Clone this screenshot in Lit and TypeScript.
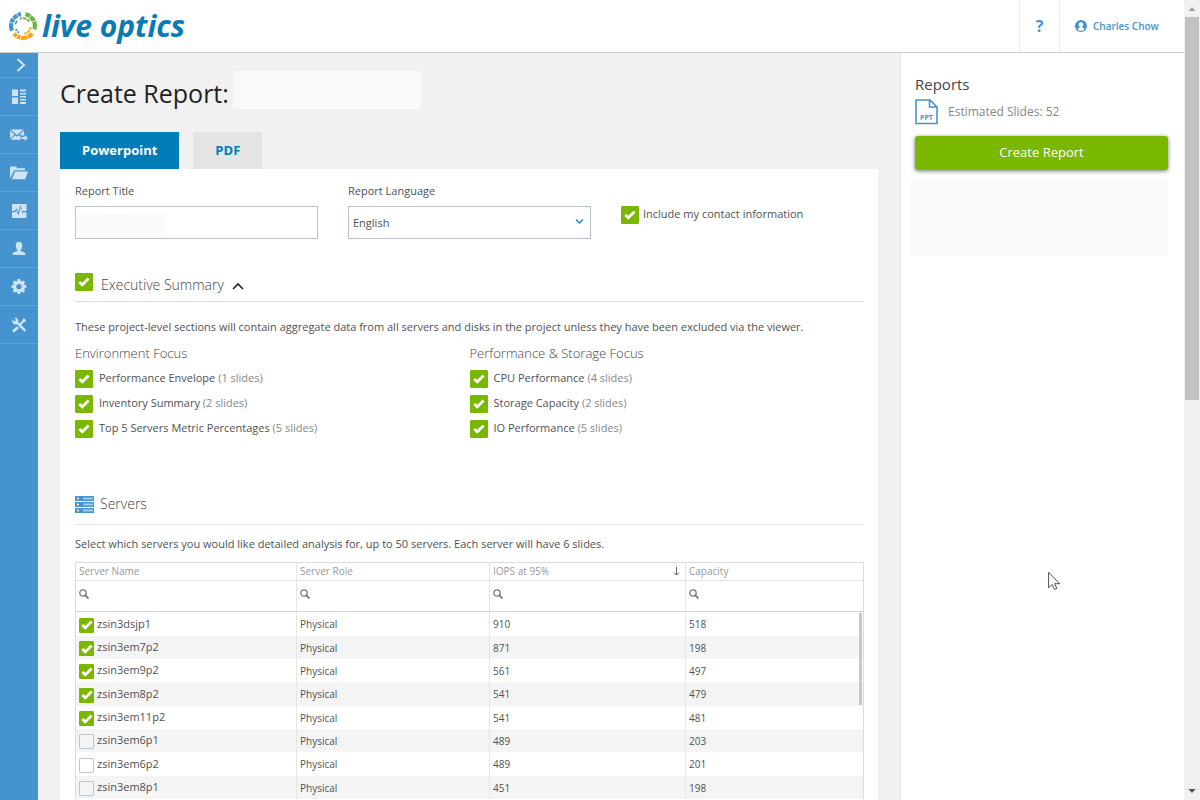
import { LitElement, html, css, svg } from "lit";
import { customElement, state } from "lit/decorators.js";

interface Arc { r: number; from: number; to: number; width: number; color: string; }
interface Section { label: string; slides: number; }
interface Server { name: string; role: string; iops: number; capacity: number; picked: boolean; }

const BLUE = "#4694cf";
const GREEN = "#6cb644";
const ORANGE = "#f7a51c";

const LOGO_ARCS: Arc[] = [
  { r: 12, from: 157, to: 194, width: 4.2, color: BLUE },
  { r: 12, from: 197, to: 217, width: 4.2, color: BLUE },
  { r: 12, from: 220, to: 241, width: 4.2, color: BLUE },
  { r: 12, from: 244, to: 260, width: 4.2, color: BLUE },
  { r: 12, from: 281, to: 305, width: 4.2, color: GREEN },
  { r: 12, from: 308, to: 335, width: 4.2, color: GREEN },
  { r: 12, from: 338, to: 376, width: 4.2, color: GREEN },
  { r: 12, from: 40, to: 65, width: 4.2, color: ORANGE },
  { r: 12, from: 68, to: 99, width: 4.2, color: ORANGE },
  { r: 12, from: 102, to: 119, width: 4.2, color: ORANGE },
  { r: 12, from: 122, to: 140, width: 4.2, color: ORANGE },
  { r: 7.8, from: 246, to: 264, width: 2, color: GREEN },
  { r: 7.8, from: 270, to: 296, width: 2, color: GREEN },
  { r: 7.8, from: 302, to: 326, width: 2, color: GREEN },
  { r: 7.8, from: 8, to: 26, width: 2, color: ORANGE },
  { r: 7.8, from: 32, to: 54, width: 2, color: ORANGE },
  { r: 7.8, from: 60, to: 80, width: 2, color: ORANGE },
  { r: 7.8, from: 120, to: 134, width: 2, color: BLUE },
  { r: 7.8, from: 142, to: 156, width: 2, color: BLUE },
  { r: 7.8, from: 192, to: 222, width: 1.6, color: BLUE },
];

const arcPath = (a: Arc) => {
  const pt = (deg: number) => {
    const t = (deg * Math.PI) / 180;
    return `${(15 + a.r * Math.cos(t)).toFixed(2)} ${(15 + a.r * Math.sin(t)).toFixed(2)}`;
  };
  return `M${pt(a.from)}A${a.r} ${a.r} 0 0 1 ${pt(a.to)}`;
};

const logoMark = html`<svg class="mark" viewBox="0 0 30 30" aria-hidden="true">
  ${LOGO_ARCS.map((a) => svg`<path d=${arcPath(a)} fill="none" stroke=${a.color} stroke-width=${a.width} />`)}
</svg>`;

const NAV = [
  { label: "Dashboard", icon: svg`<path d="M2 1.500h6v6.500H2zM2 9.500h6V16H2zM10 1.500h6v2h-6zM10 5h6v1.500h-6zM10 8h6v1.500h-6zM10 11h6v1.500h-6zM10 14h6v2h-6z"/>` },
  { label: "Send", icon: svg`<path d="M.5 3.500h13L7 9zM0 4.600l4.300 4L0 12.800zM14 4.600v5h-2.200L9.700 8.600zM5 9.300l2 1.500 2-1.500 1.600 1.400v3.100H.6zM11.500 10.900h3V9l3.500 3-3.500 3v-2h-3z"/>` },
  { label: "Projects", icon: svg`<path d="M0 14.500V3.500q0-1 1-1h5l1.500 1.700H14q1 0 1 1v1H5.200Q4 6.200 3.500 7.400z"/><path d="M5 7.500h13l-2.800 7.700H1.900z"/>` },
  { label: "Performance", icon: svg`<path fill-rule="evenodd" d="M2 2h14.500v14H2zM2 9v1.200h3.200l1.200-2 1.900 5.200 2.300-7.700 1.700 5.500.8-1h3.400V9h-4l-.6.5L10.700 3 8.100 10.500 6.600 6.200 4.600 9z"/>` },
  { label: "Users", icon: svg`<path d="M9 1.800c2.200 0 3.300 1.700 3.300 3.800S11.200 9.800 10.600 10v1l3.600 1.200q1.300.6 1.300 2.800H2.500q0-2.200 1.300-2.800L7.400 11v-1C6.800 9.800 5.700 7.700 5.700 5.600S6.800 1.800 9 1.800z"/>` },
  { label: "Settings", icon: svg`<path fill-rule="evenodd" d="M7.600 1.500h2.800l.5 2 1.300.6 1.800-1.100 2 2-1.100 1.800.6 1.300 2 .5v2.800l-2 .5-.6 1.300 1.100 1.800-2 2-1.800-1.100-1.300.6-.5 2H7.600l-.5-2-1.300-.6L4 17l-2-2 1.100-1.800-.6-1.300-2-.5V8.600l2-.5.6-1.300L2 5l2-2 1.800 1.100 1.300-.6zM9 7a3 3 0 1 0 0 6 3 3 0 0 0 0-6z" transform="translate(1 -.2) scale(.88)"/>` },
  { label: "Tools", icon: svg`<path d="M2.200 3.400l2.300 2.200 1.700-1.500L4.200 1.800C7 1 9 3.400 8.200 6l7.300 7.400q1 2-1 2.400L7 8.300C4.500 9 1.700 7.300 2.200 3.400z"/><path d="M13.700 2l2.300 2.200-1 1.700-1.500.6-3 3-1.400-1.400 3-3 .5-1.500zM7.300 10.300l1.600 1.600-4.200 4q-1.500.6-2-.4-.8-.8-.1-1.600z"/>` },
];

const magnifier = html`<svg class="lens" viewBox="0 0 10 10" aria-hidden="true">
  <circle cx="4" cy="4" r="3.2" fill="none" stroke="#777" stroke-width="1.300" />
  <path d="M6.300 6.300l3.200 3.200" stroke="#777" stroke-width="1.700" />
</svg>`;

const ENVIRONMENT: Section[] = [
  { label: "Performance Envelope", slides: 1 },
  { label: "Inventory Summary", slides: 2 },
  { label: "Top 5 Servers Metric Percentages", slides: 5 },
];
const PERFORMANCE: Section[] = [
  { label: "CPU Performance", slides: 4 },
  { label: "Storage Capacity", slides: 2 },
  { label: "IO Performance", slides: 5 },
];

const server = (name: string, iops: number, capacity: number, picked: boolean): Server =>
  ({ name, role: "Physical", iops, capacity, picked });

const SERVERS: Server[] = [
  server("zsin3dsjp1", 910, 518, true),
  server("zsin3em7p2", 871, 198, true),
  server("zsin3em9p2", 561, 497, true),
  server("zsin3em8p2", 541, 479, true),
  server("zsin3em11p2", 541, 481, true),
  server("zsin3em6p1", 489, 203, false),
  server("zsin3em6p2", 489, 201, false),
  server("zsin3em8p1", 451, 198, false),
];

const COLUMNS = ["Server Name", "Server Role", "IOPS at 95%", "Capacity"];

@customElement("app-root")
export class AppRoot extends LitElement {
  static styles = css`
    :host {
      display: flex;
      height: 100vh;
      overflow: hidden;
      background: #fff;
      color: #4f5256;
      font: 11px/16px "Open Sans", "Noto Sans", sans-serif;
    }
    * { box-sizing: border-box; }
    h1, h2, h3, p { margin: 0; font-weight: 400; }
    a { color: inherit; text-decoration: none; }
    button, input, select { font: inherit; color: inherit; }

    .app { flex: 1; min-width: 0; display: flex; flex-direction: column; }
    .top {
      flex: none;
      height: 53px;
      display: flex;
      align-items: stretch;
      border-bottom: 1px solid #ccc;
      color: #4694cf;
      font-weight: 600;
    }
    .brand {
      flex: 1;
      display: flex;
      align-items: center;
      gap: 4px;
      padding-left: 8px;
      color: #0a7ab9;
      font-size: 30px;
      line-height: 40px;
      font-weight: 700;
      font-style: italic;
    }
    .mark { width: 30px; height: 30px; }
    .help {
      width: 40px;
      border: 0;
      border-left: 1px solid #ececec;
      background: none;
      font-size: 16px;
      font-weight: 700;
      padding: 0;
    }
    .account {
      width: 125px;
      display: flex;
      align-items: center;
      gap: 6px;
      padding-left: 15px;
      border-left: 1px solid #ececec;
      font-size: 10px;
    }
    .avatar { width: 12px; height: 12px; }

    .body { flex: 1; min-height: 0; display: flex; }
    .side { flex: none; width: 38px; background: #4694cf; }
    .side a {
      display: flex;
      align-items: center;
      justify-content: center;
      height: 38px;
      border-bottom: 1px solid #5ba3da;
    }
    .side .expand { height: 25px; padding-left: 3px; }
    .side svg { width: 18px; height: 18px; fill: #cfe3f4; }
    .side .expand svg { width: 10px; height: 14px; fill: none; stroke: #cfe3f4; stroke-width: 2; }

    .main {
      flex: 1;
      min-width: 0;
      overflow: hidden;
      padding: 18px 22px 0;
      background: #f1f1f1;
    }
    .title { display: flex; align-items: center; gap: 4px; height: 38px; }
    .title h1 { font-size: 25px; line-height: 38px; color: #222; white-space: nowrap; padding-top: 6px; }
    .title .name { width: 188px; height: 38px; background: #f9f9f9; }
    .tabs { display: flex; gap: 14px; margin-top: 23px; }
    .tab {
      height: 37px;
      padding: 0 22px 2px;
      border: 0;
      background: #e4e4e4;
      color: #007db8;
      font-size: 13px;
      font-weight: 700;
    }
    .tab.on { background: #007db8; color: #fff; }

    .card { background: #fff; padding: 14px 14px 14px 15px; }
    .fields { display: grid; grid-template-columns: repeat(3, 1fr); gap: 30px; }
    .field { display: flex; flex-direction: column; gap: 7px; }
    .box {
      width: 100%;
      height: 33px;
      border: 1px solid #b2c4d2;
      border-radius: 0;
      background-color: #fff;
      padding: 0 4px;
      margin: 0;
    }
    .masked {
      background: linear-gradient(#f9f9f9, #f9f9f9) 0 50% / 88px 20px no-repeat #fff;
    }
    .choice { position: relative; }
    .choice select { appearance: none; display: block; }
    .choice svg { position: absolute; right: 7px; top: 12px; width: 9px; height: 7px; pointer-events: none; }

    .tick {
      flex: none;
      appearance: none;
      width: 18px;
      height: 18px;
      margin: 0;
      border: 1px solid #b9c9d6;
      border-radius: 1px;
      background: transparent;
    }
    .tick:checked {
      border-color: #7ab800;
      background: #7ab800 center / 12px 10px no-repeat
        url("data:image/svg+xml,%3Csvg xmlns='http://www.w3.org/2000/svg' viewBox='0 0 12 10'%3E%3Cpath d='M1.300 5l3 2.800L10.600 1.600' fill='none' stroke='white' stroke-width='2.800'/%3E%3C/svg%3E");
    }
    .option { display: flex; align-items: flex-start; gap: 6px; }
    .contact { padding-top: 23px; gap: 4px; }

    .head {
      display: flex;
      align-items: center;
      height: 31px;
      border-bottom: 1px solid #e2e2e2;
      color: #444;
    }
    .head h2 { font-size: 14px; line-height: 20px; font-weight: 300; }
    .summary { margin-top: 32px; padding-bottom: 8px; gap: 8px; }
    .summary h2 { padding-top: 6px; }
    .summary .fold { border: 0; background: none; padding: 7px 0 0; line-height: 0; }
    .fold svg { width: 12px; height: 8px; }
    .note { margin-top: 17px; }
    .focus { display: grid; grid-template-columns: 1fr 1fr; margin-top: 8px; }
    .focus h3 { font-size: 13px; line-height: 20px; font-weight: 300; margin-bottom: 7px; color: #444; }
    .focus .option { height: 25px; }
    .focus small { font-size: 11px; color: #85888c; }

    .servers { margin-top: 43px; padding-bottom: 4px; gap: 6px; height: 37px; }
    .servers svg { width: 19px; height: 17px; }
    .pick { margin-top: 11px; }
    .grid { position: relative; margin-top: 10px; }
    .thumb { position: absolute; right: 2px; top: 51px; width: 3px; height: 92px; background: #c8c8c8; }
    table {
      width: 100%;
      table-layout: fixed;
      border-collapse: separate;
      border-spacing: 0;
      border: 1px solid #dcdcdc;
      border-bottom: 0;
    }
    th, td { padding: 0 3px; border-right: 1px solid #e6e6e6; text-align: left; font-weight: 400; }
    th:last-child, td:last-child { border-right: 0; }
    .c1 { width: 221px; }
    .c2 { width: 193px; }
    .c3 { width: 196px; }
    .names th { height: 18px; font-size: 10px; color: #96999c; border-bottom: 1px solid #e2e2e2; }
    .colhead { display: flex; justify-content: space-between; align-items: center; line-height: 17px; }
    .colhead svg { width: 7px; height: 9px; margin-right: 2px; }
    .filters td { height: 31px; border-bottom: 1px solid #d6d6d6; }
    .search { display: flex; align-items: center; gap: 4px; padding: 0 0 4px; }
    .lens { flex: none; width: 10px; height: 10px; }
    .search input { flex: 1; min-width: 0; height: 20px; border: 0; background: none; padding: 0; }
    .rows td { height: 23px; font-size: 10px; }
    .rows tr:nth-child(3n + 1) td { height: 24px; }
    .rows tr:nth-child(even) { background: #f4f4f4; }
    .rows .option { gap: 3px; font-size: 11px; align-items: flex-end; }
    .rows label { padding-bottom: 1px; }
    .rows .tick { width: 15px; height: 15px; }

    .aside {
      flex: none;
      width: 284px;
      padding: 20px 16px 0 14px;
      border-left: 1px solid #e8e8e8;
      background: #fff;
    }
    .aside h2 { font-size: 15px; line-height: 22px; color: #444; }
    .estimate { display: flex; align-items: center; gap: 9px; margin-top: 4px; color: #85888c; font-size: 12px; height: 26px; }
    .estimate svg { width: 24px; height: 26px; }
    .create {
      display: block;
      width: 100%;
      height: 34px;
      margin-top: 11px;
      padding: 0 0 2px;
      border: 0;
      border-radius: 3px;
      background: #7ab800;
      color: #fff;
      font-size: 13px;
      box-shadow: 0 1px 4px rgba(0, 0, 0, 0.55);
    }
    .empty { height: 75px; margin: 10px 0 0 -4px; background: #f9f9f9; }

    .bar {
      flex: none;
      width: 16px;
      display: flex;
      flex-direction: column;
      align-items: center;
      background: #f1f1f1;
    }
    .bar svg { flex: none; width: 16px; height: 17px; }
    .track { flex: 1; width: 14px; }
    .grip { height: 50%; background: #c1c1c1; }
    .pointer { position: absolute; left: 1048px; top: 571px; width: 13px; height: 20px; }
  `;

  @state() private servers = SERVERS;
  @state() private open = true;
  @state() private tab = "Powerpoint";

  private pick(index: number) {
    this.servers = this.servers.map((s, i) => (i === index ? { ...s, picked: !s.picked } : s));
  }

  private sections(title: string, items: Section[]) {
    return html`<div>
      <h3>${title}</h3>
      ${items.map((s) => html`<label class="option">
        <input class="tick" type="checkbox" checked />
        <span>${s.label} <small>(${s.slides} slides)</small></span>
      </label>`)}
    </div>`;
  }

  private table() {
    return html`<div class="grid">
      <table>
        <colgroup><col class="c1" /><col class="c2" /><col class="c3" /><col /></colgroup>
        <thead>
          <tr class="names">
            ${COLUMNS.map((c, i) => html`<th scope="col"><div class="colhead"><span>${c}</span>${i === 2
              ? html`<svg viewBox="0 0 7 9" aria-hidden="true"><path d="M3.500 0v8M1 5.500l2.500 2.600L6 5.500" fill="none" stroke="#666" /></svg>`
              : ""}</div></th>`)}
          </tr>
          <tr class="filters">
            ${COLUMNS.map((c) => html`<td><div class="search">${magnifier}<input type="text" aria-label=${"Filter " + c} /></div></td>`)}
          </tr>
        </thead>
        <tbody class="rows">
          ${this.servers.map((s, i) => html`<tr>
            <td><div class="option">
              <input class="tick" type="checkbox" id=${"server-" + i} .checked=${s.picked} @change=${() => this.pick(i)} />
              <label for=${"server-" + i}>${s.name}</label>
            </div></td>
            <td>${s.role}</td>
            <td>${s.iops}</td>
            <td>${s.capacity}</td>
          </tr>`)}
        </tbody>
      </table>
      <div class="thumb"></div>
    </div>`;
  }

  render() {
    return html`
      <div class="app">
        <header class="top">
          <a class="brand" href="#">${logoMark}<span>live optics</span></a>
          <button class="help" type="button">?</button>
          <a class="account" href="#">
            <svg class="avatar" viewBox="0 0 12 12" aria-hidden="true">
              <circle cx="6" cy="6" r="6" fill="#4694cf" />
              <path d="M6 2.200c1.500 0 2.300 1 2.300 2.300S7.600 6.900 7.200 7.200v.6l2.500 1.100Q8.300 10.800 6 10.800T2.300 8.900l2.500-1.100v-.6C4.400 6.900 3.700 5.800 3.700 4.500S4.500 2.200 6 2.200z" fill="#fff" />
            </svg>
            <span>Charles Chow</span>
          </a>
        </header>
        <div class="body">
          <nav class="side">
            <a class="expand" href="#" aria-label="Expand menu"><svg viewBox="0 0 10 14"><path d="M1.500 1l6.500 6-6.500 6" /></svg></a>
            ${NAV.map((n) => html`<a href="#" aria-label=${n.label}><svg viewBox="0 0 18 18">${n.icon}</svg></a>`)}
          </nav>
          <main class="main">
            <div class="title"><h1>Create Report:</h1><div class="name"></div></div>
            <div class="tabs">
              ${["Powerpoint", "PDF"].map((t) => html`<button type="button" class="tab ${this.tab === t ? "on" : ""}" @click=${() => (this.tab = t)}>${t}</button>`)}
            </div>
            <section class="card">
              <div class="fields">
                <div class="field">
                  <label for="report-title">Report Title</label>
                  <input class="box masked" id="report-title" type="text" />
                </div>
                <div class="field">
                  <label for="language">Report Language</label>
                  <div class="choice">
                    <select class="box" id="language"><option>English</option></select>
                    <svg viewBox="0 0 9 7" aria-hidden="true"><path d="M1 1.500l3.500 3.500L8 1.500" fill="none" stroke="#1488c6" stroke-width="1.400" /></svg>
                  </div>
                </div>
                <label class="option contact">
                  <input class="tick" type="checkbox" checked />
                  <span>Include my contact information</span>
                </label>
              </div>
              <div class="head summary">
                <input class="tick" type="checkbox" checked id="summary" />
                <h2><label for="summary">Executive Summary</label></h2>
                <button class="fold" type="button" aria-label="Toggle section" @click=${() => (this.open = !this.open)}>
                  <svg viewBox="0 0 12 8"><path d="M1 7l5-5 5 5" fill="none" stroke="#222" stroke-width="1.600" /></svg>
                </button>
              </div>
              ${this.open
                ? html`<p class="note">These project-level sections will contain aggregate data from all servers and disks in the project unless they have been excluded via the viewer.</p>
                    <div class="focus">
                      ${this.sections("Environment Focus", ENVIRONMENT)}
                      ${this.sections("Performance & Storage Focus", PERFORMANCE)}
                    </div>`
                : ""}
              <div class="head servers">
                <svg viewBox="0 0 19 17" aria-hidden="true">
                  ${[0, 6, 12].map((y) => svg`<rect y=${y} width="19" height="5" rx=".5" fill="#4694cf" />
                    <circle cx="3" cy=${y + 2.5} r="1" fill="#fff" />
                    ${[9, 11, 13, 15, 17].map((x) => svg`<rect x=${x - 0.5} y=${y + 1.5} width="1" height="2" fill="#fff" />`)}`)}
                </svg>
                <h2>Servers</h2>
              </div>
              <p class="pick">Select which servers you would like detailed analysis for, up to 50 servers. Each server will have 6 slides.</p>
              ${this.table()}
            </section>
          </main>
          <aside class="aside">
            <h2>Reports</h2>
            <div class="estimate">
              <svg viewBox="0 0 24 26" aria-hidden="true">
                <path d="M1 1h14l7 7v16.500H1zM14.500 1v7H22" fill="none" stroke="#4694cf" stroke-width="1.600" />
                <text x="11.500" y="21" text-anchor="middle" font-size="7" font-weight="700" fill="#4694cf">PPT</text>
              </svg>
              <span>Estimated Slides: 52</span>
            </div>
            <button class="create" type="button">Create Report</button>
            <div class="empty"></div>
          </aside>
        </div>
      </div>
      <div class="bar" aria-hidden="true">
        <svg viewBox="0 0 16 17"><path d="M4.500 11L8 7l3.500 4z" fill="#a0a0a0" /></svg>
        <div class="track"><div class="grip"></div></div>
        <svg viewBox="0 0 16 17"><path d="M4.500 6L8 10l3.500-4z" fill="#505050" /></svg>
      </div>
      <svg class="pointer" viewBox="0 0 13 20" aria-hidden="true">
        <path d="M.6 1.200v15.600l3.600-3.300 2.500 5 2.200-1.100-2.400-4.700h5.200z" fill="#fff" stroke="#3a3a44" stroke-width=".9" />
      </svg>
    `;
  }
}
